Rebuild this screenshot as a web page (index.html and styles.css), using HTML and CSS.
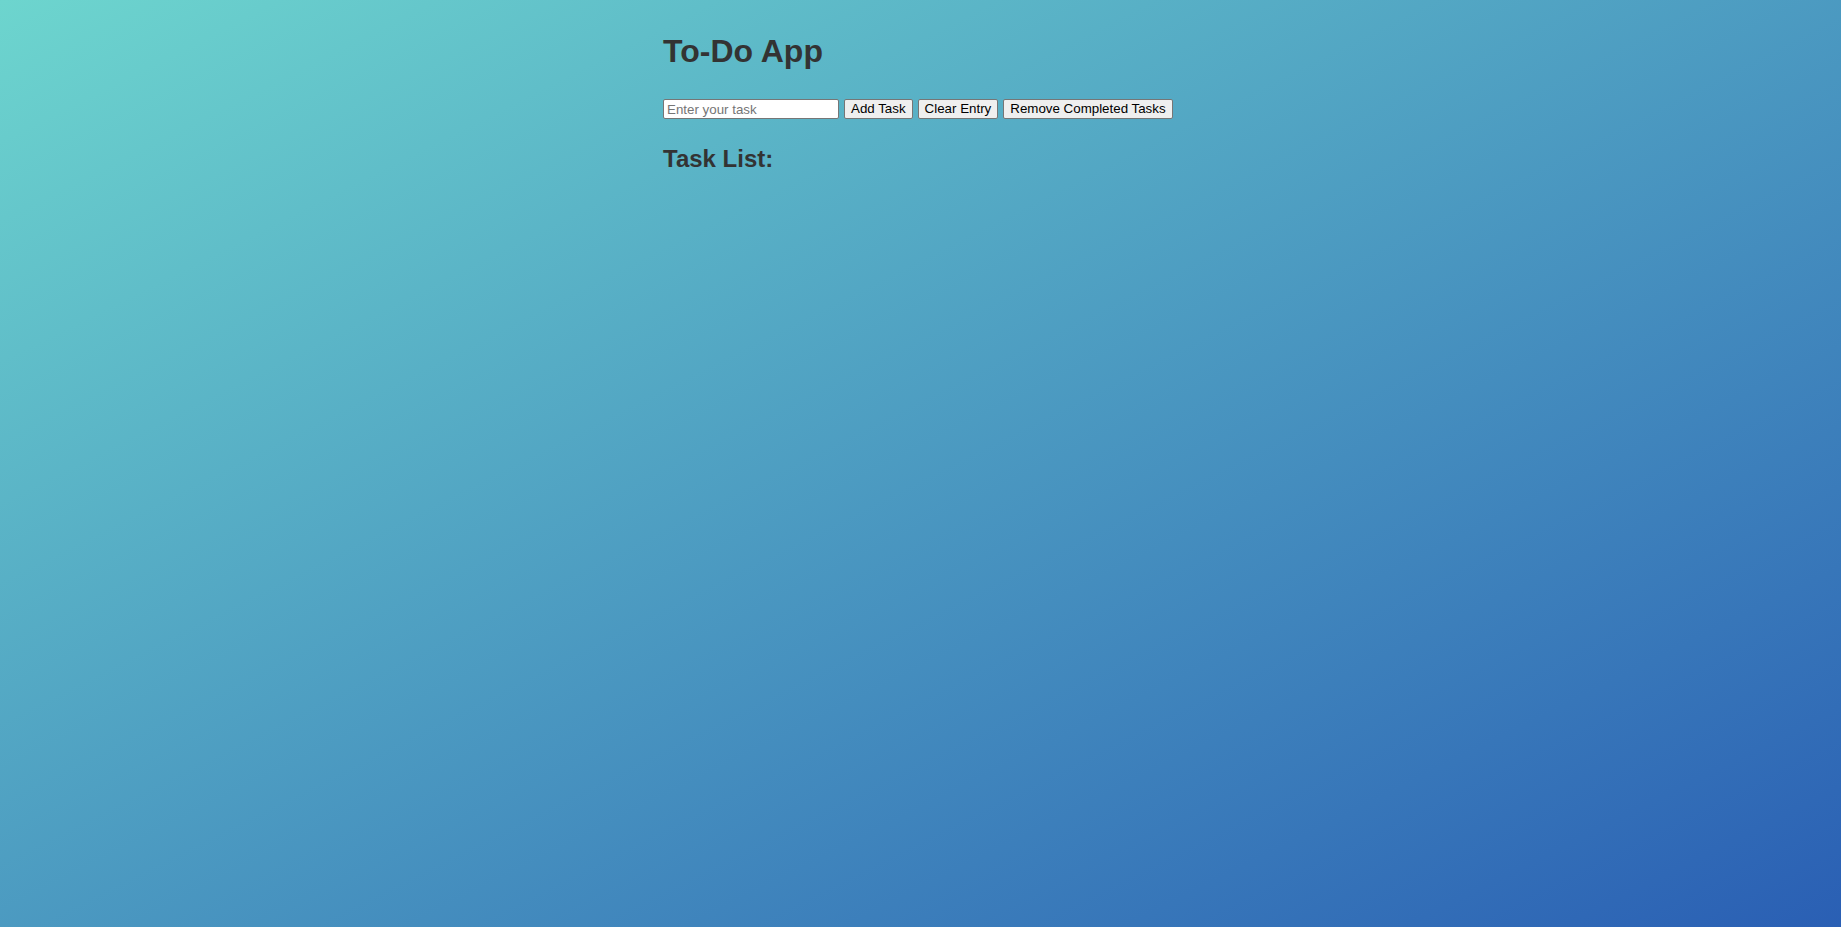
FILE: index.html
```html
<!DOCTYPE html>
<html lang="en">
<head>
<meta charset="utf-8">
<title>To-Do App</title>
<link rel="stylesheet" href="styles.css">
</head>
<body>
  <main class="app">
    <h1 class="app-title">To-Do App</h1>
    <div class="entry-row">
      <input class="task-input" type="text" placeholder="Enter your task">
      <button class="btn" type="button">Add Task</button>
      <button class="btn" type="button">Clear Entry</button>
      <button class="btn" type="button">Remove Completed Tasks</button>
    </div>
    <h2 class="list-title">Task List:</h2>
    <ul class="task-list"></ul>
  </main>
</body>
</html>
```

FILE: styles.css
```css
html, body {
  margin: 0;
  padding: 0;
  height: 100%;
}

body {
  min-height: 100vh;
  background: linear-gradient(to bottom right, #6dd5ce, #2a5fb4);
  font-family: "Liberation Sans", Arial, sans-serif;
  color: #333333;
}

.app {
  max-width: 515px;
  margin: 0 auto;
  padding-top: 33px;
  display: flex;
  flex-direction: column;
}

.app-title {
  margin: 0;
  font-size: 32px;
  line-height: 37px;
  font-weight: bold;
}

.entry-row {
  margin-top: 29px;
  display: flex;
  gap: 5px;
  align-items: center;
}

.task-input {
  box-sizing: border-box;
  width: 176px;
  height: 20px;
  margin: 0;
  padding: 1px 3px;
  border: 1px solid #767676;
  border-radius: 2px;
  background: #ffffff;
  font-family: "Liberation Sans", Arial, sans-serif;
  font-size: 13.333px;
  color: #000000;
  outline: none;
}

.task-input::placeholder {
  color: #757575;
}

.btn {
  box-sizing: border-box;
  height: 20px;
  margin: 0;
  padding: 1px 6px;
  border: 1px solid #767676;
  border-radius: 2px;
  background: #efefef;
  font-family: "Liberation Sans", Arial, sans-serif;
  font-size: 13.333px;
  color: #000000;
  line-height: 16px;
  white-space: nowrap;
}

.list-title {
  margin: 26px 0 0 0;
  font-size: 24px;
  line-height: 28px;
  font-weight: bold;
}

.task-list {
  margin: 0;
  padding: 0;
  list-style: none;
}
```
